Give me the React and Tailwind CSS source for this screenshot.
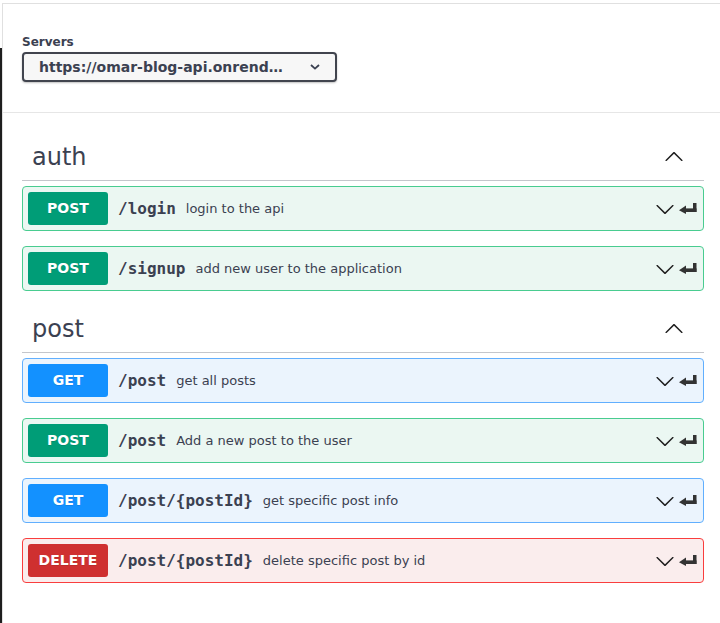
import React from "react";

const METHOD = {
  POST: {
    block: "border-[#49cc90] bg-[#ebf7f2]",
    badge: "bg-[#009d77]",
  },
  GET: {
    block: "border-[#61affe] bg-[#ebf4fd]",
    badge: "bg-[#1391ff]",
  },
  DELETE: {
    block: "border-[#f93e3e] bg-[#faeded]",
    badge: "bg-[#cf3030]",
  },
};

const sections = [
  {
    tag: "auth",
    ops: [
      { method: "POST", path: "/login", desc: "login to the api" },
      { method: "POST", path: "/signup", desc: "add new user to the application" },
    ],
  },
  {
    tag: "post",
    ops: [
      { method: "GET", path: "/post", desc: "get all posts" },
      { method: "POST", path: "/post", desc: "Add a new post to the user" },
      { method: "GET", path: "/post/{postId}", desc: "get specific post info" },
      { method: "DELETE", path: "/post/{postId}", desc: "delete specific post by id" },
    ],
  },
];

const ARROW =
  "M17.418 6.109c.272-.268.709-.268.979 0s.271.701 0 .969l-7.908 7.83c-.27.268-.707.268-.979 0l-7.908-7.83c-.27-.268-.27-.701 0-.969.271-.268.709-.268.979 0L10 13.25l7.418-7.141z";

function ChevronDown({ className = "" }) {
  return (
    <svg width="20" height="20" viewBox="0 0 20 20" className={className}>
      <path d={ARROW} fill="#1f1f1f" />
    </svg>
  );
}

function ChevronUp() {
  return (
    <svg width="20" height="20" viewBox="0 0 20 20">
      <g transform="rotate(180 10 10)">
        <path d={ARROW} fill="#1f1f1f" />
      </g>
    </svg>
  );
}

function JumpTo() {
  return (
    <svg width="18" height="11" viewBox="0 0 18 11" className="ml-[4px] mr-[1px]">
      <rect x="14" y="0" width="3.5" height="9" fill="#333" />
      <rect x="6" y="5.4" width="11.5" height="3.6" fill="#333" />
      <path d="M0 7.2 L7 2.4 L7 11 Z" fill="#333" />
    </svg>
  );
}

function Op({ method, path, desc }) {
  const m = METHOD[method];
  return (
    <div className={`mb-[15px] flex items-center rounded-[4px] border p-[5px] ${m.block}`}>
      <div
        className={`flex h-[33px] w-[80px] shrink-0 items-center justify-center rounded-[3px] text-[14px] font-bold text-white [text-shadow:0_1px_0_rgba(0,0,0,0.1)] ${m.badge}`}
      >
        {method}
      </div>
      <span className="px-[10px] font-['DejaVu_Sans_Mono',monospace] text-[16px] font-bold text-[#3b4151]">
        {path}
      </span>
      <span className="text-[13px] text-[#3b4151]">{desc}</span>
      <div className="ml-auto flex items-center">
        <ChevronDown />
        <JumpTo />
      </div>
    </div>
  );
}

export default function App() {
  return (
    <div className="flex h-[623px] w-[720px] overflow-hidden bg-white font-['DejaVu_Sans',sans-serif] text-[#3b4151]">
      <div className="flex w-[2px] shrink-0 flex-col">
        <div className="h-[48px]" />
        <div className="flex-1 bg-[#1e1e1e]" />
      </div>
      <div className="mt-[3px] flex-1 border-t border-l border-[#e0e0e0]">
        <div className="border-b border-[#e6e6e6] pt-[31px] pb-[30px] pl-[19px]">
          <div className="mb-[2px] text-[12px] leading-[15px] font-bold">Servers</div>
          <div className="flex h-[30px] w-[315px] items-center justify-between rounded-[4px] border-2 border-[#41444e] bg-[#f7f7f7] pr-[15px] pl-[15px] shadow-[0_1px_2px_0_rgba(0,0,0,0.25)]">
            <span className="text-[14px] font-bold">https://omar-blog-api.onrend…</span>
            <svg width="10" height="6" viewBox="0 0 10 6">
              <path d="M1 1 L5 4.6 L9 1" fill="none" stroke="#3b4151" strokeWidth="1.8" />
            </svg>
          </div>
        </div>
        <div className="pt-[21px] pr-[16px] pl-[19px]">
          {sections.map((s) => (
            <div key={s.tag}>
              <div className="mb-[5px] flex items-center justify-between border-b border-[#c4c6cb] py-[10px] pr-[20px] pl-[10px]">
                <h3 className="text-[24px] leading-[26px] text-[#3b4151]">{s.tag}</h3>
                <ChevronUp />
              </div>
              {s.ops.map((o, i) => (
                <Op key={i} {...o} />
              ))}
            </div>
          ))}
        </div>
      </div>
    </div>
  );
}
